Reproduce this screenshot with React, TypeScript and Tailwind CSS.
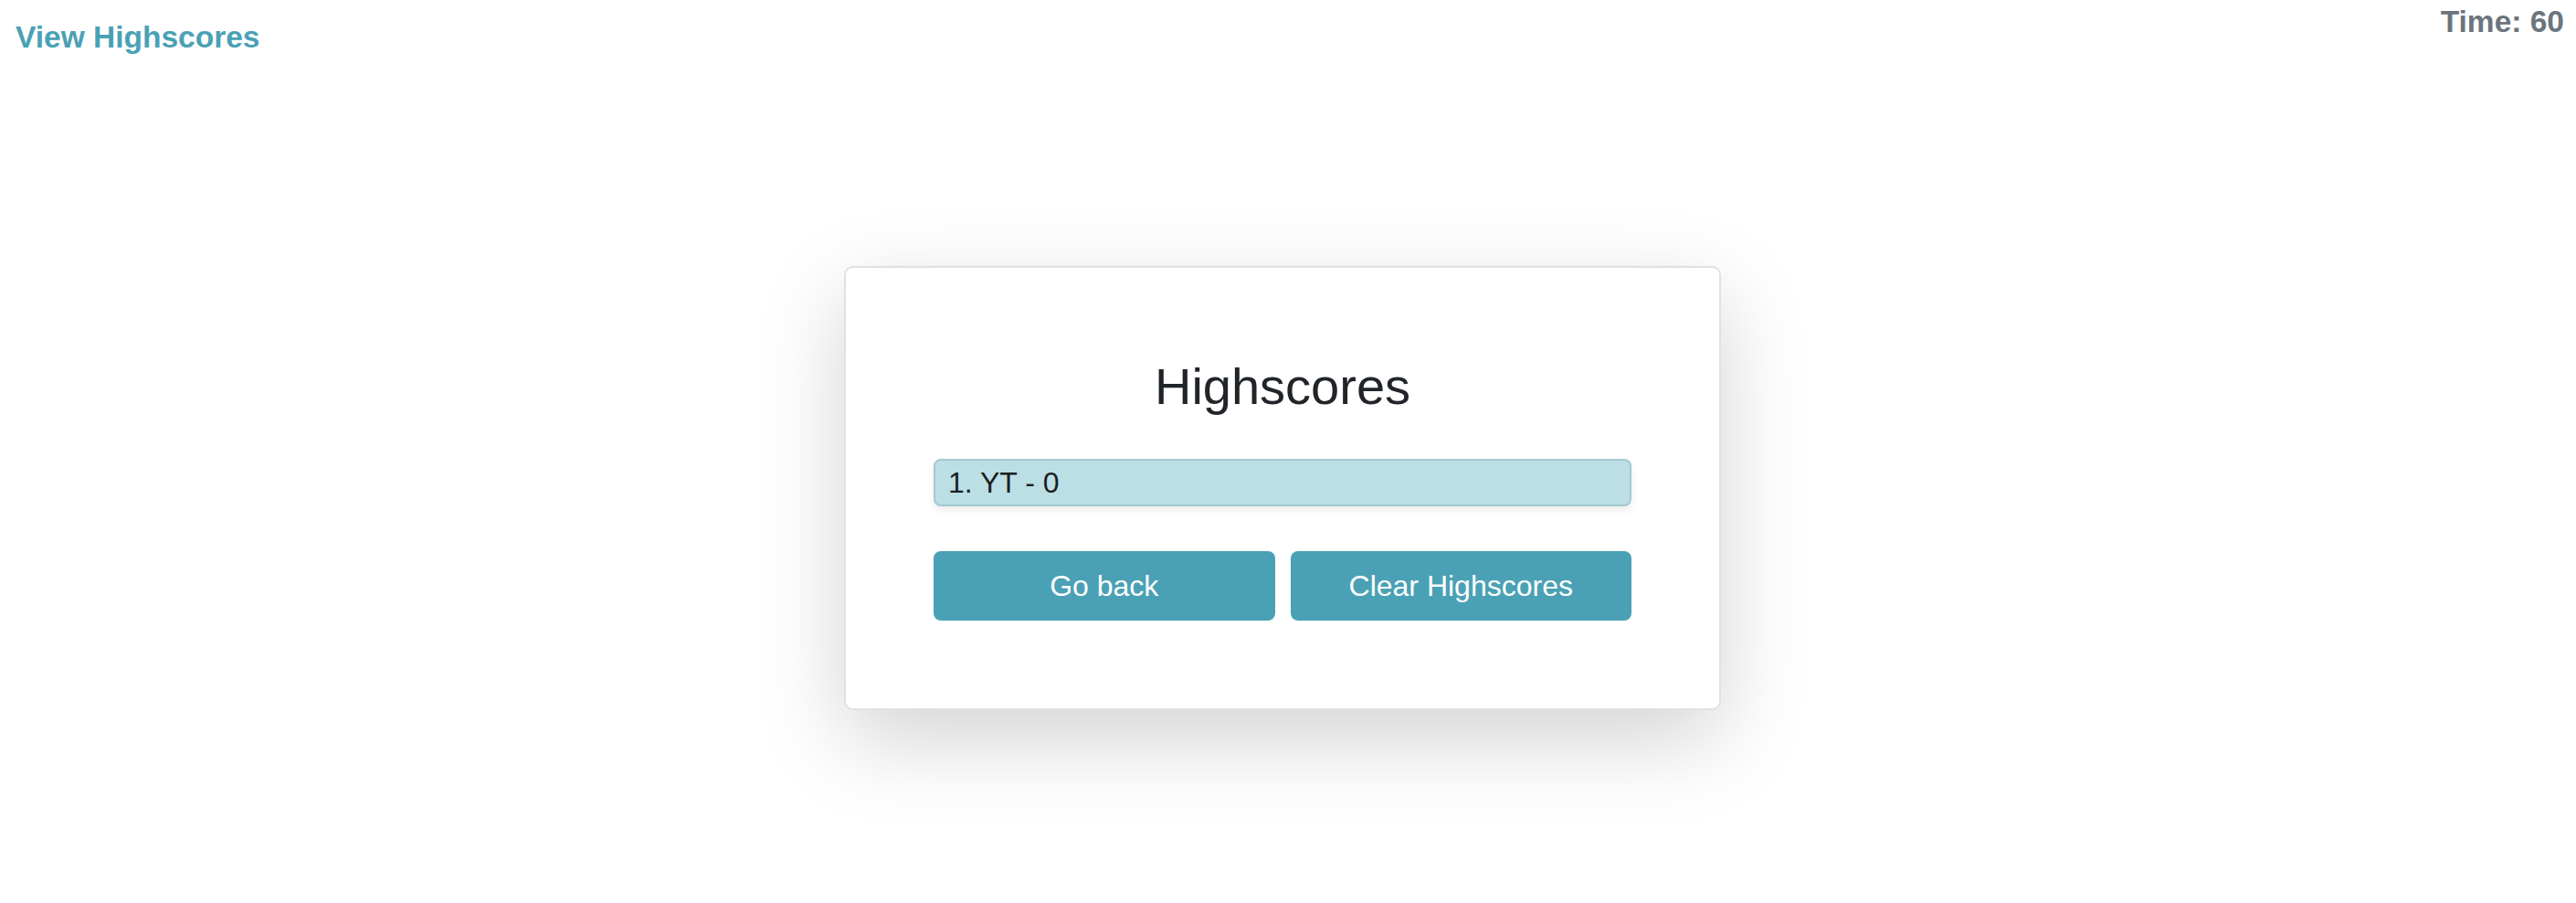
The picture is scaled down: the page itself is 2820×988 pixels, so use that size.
const font = { fontFamily: '"Liberation Sans", Arial, sans-serif' };

export default function App() {
  const scores = [{ initials: 'YT', score: 0 }];

  return (
    <div className="min-h-[988px] w-full bg-white text-[#212529]" style={font}>
      <header className="flex items-start justify-between">
        <a className="pl-[17px] pt-[17px] text-[33.5px] font-bold leading-[48px] text-[#4aa1b5]">
          View Highscores
        </a>
        <div className="pr-[13px] text-[33.5px] font-bold leading-[48px] text-[#6c757d]">
          Time: 60
        </div>
      </header>

      <main className="flex justify-center pr-[12px] pt-[226px]">
        <div className="w-[960px] rounded-[10px] border-2 border-[#dee2e6] bg-white px-[96px] py-[96px] shadow-[0_32px_96px_rgba(0,0,0,0.175)]">
          <h3 className="mb-[46px] text-center text-[56px] font-normal leading-[67px] text-[#212529]">
            Highscores
          </h3>

          <ul className="flex flex-col">
            {scores.map((s, i) => (
              <li
                key={i}
                className="rounded-[8px] border-2 border-[#a4c9cf] bg-[#bbdfe5] px-[14px] text-[32px] leading-[48px] text-[#1b1e21] shadow-[0_4px_8px_rgba(0,0,0,0.08)]"
              >
                {i + 1}. {s.initials} - {s.score}
              </li>
            ))}
          </ul>

          <div className="mt-[49px] grid grid-cols-2 gap-[17px]">
            <button className="h-[76px] rounded-[8px] bg-[#4aa1b5] text-[32px] leading-[48px] text-white">
              Go back
            </button>
            <button className="h-[76px] rounded-[8px] bg-[#4aa1b5] text-[32px] leading-[48px] text-white">
              Clear Highscores
            </button>
          </div>
        </div>
      </main>
    </div>
  );
}
